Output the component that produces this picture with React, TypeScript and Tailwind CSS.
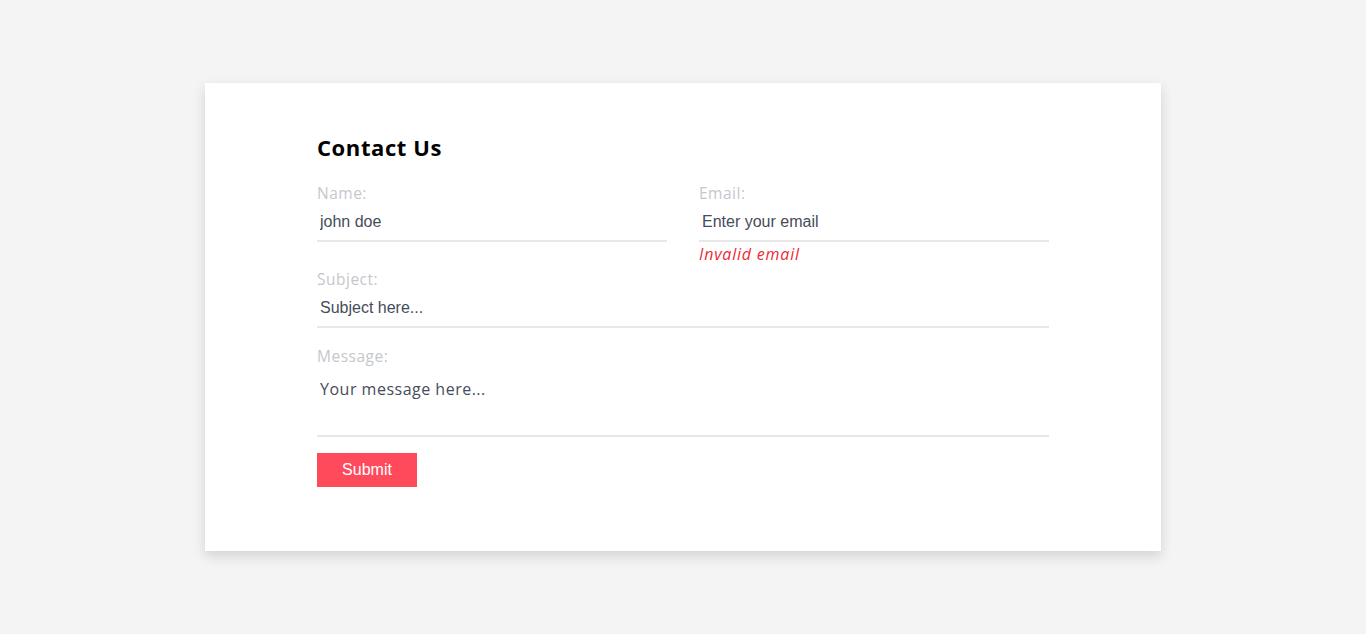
export default function App() {
  const label = "block text-[15.5px] leading-[22px] tracking-[0.5px] text-[#c6c7cc] font-['Open_Sans',sans-serif]";
  const input =
    "block w-full h-[38px] px-[3px] border-0 border-b-2 border-[#e7e7e7] bg-white text-[16px] text-[#464c5b] font-['Liberation_Sans',Arial,sans-serif] outline-none";

  return (
    <div className="min-h-[634px] bg-[#f4f4f4] pt-[83px]">
      <div className="mx-auto w-[956px] h-[468px] bg-white shadow-[0_5px_12px_rgba(0,0,0,0.14)] px-[112px] pt-[49px]">
        <h2 className="text-[22px] leading-[30px] tracking-[0.6px] font-bold text-black font-['Open_Sans',sans-serif]">Contact Us</h2>

        <div className="mt-[20px] grid grid-cols-2 gap-x-8">
          <div>
            <label className={label}>Name:</label>
            <input className={input} defaultValue="john doe" />
          </div>
          <div>
            <label className={label}>Email:</label>
            <input className={input} defaultValue="Enter your email" />
            <p className="mt-px text-[16px] leading-[22px] tracking-[0.8px] italic text-[#ee2a37] font-['Open_Sans',sans-serif]">Invalid email</p>
          </div>
        </div>

        <div className="mt-[3px]">
          <label className={label}>Subject:</label>
          <input className={input} defaultValue="Subject here..." />
        </div>

        <div className="mt-[17px]">
          <label className={label}>Message:</label>
          <textarea
            className="block w-full h-[70px] resize-none px-[3px] pt-[10px] border-0 border-b-2 border-[#e7e7e7] text-[16px] leading-[24px] tracking-[0.5px] text-[#464c5b] font-['Open_Sans',sans-serif] outline-none"
            defaultValue="Your message here..."
          />
        </div>

        <button className="mt-4 w-[100px] h-[34px] bg-[#ff4a5c] text-white text-[16px] font-['Liberation_Sans',Arial,sans-serif]">
          Submit
        </button>
      </div>
    </div>
  );
}
